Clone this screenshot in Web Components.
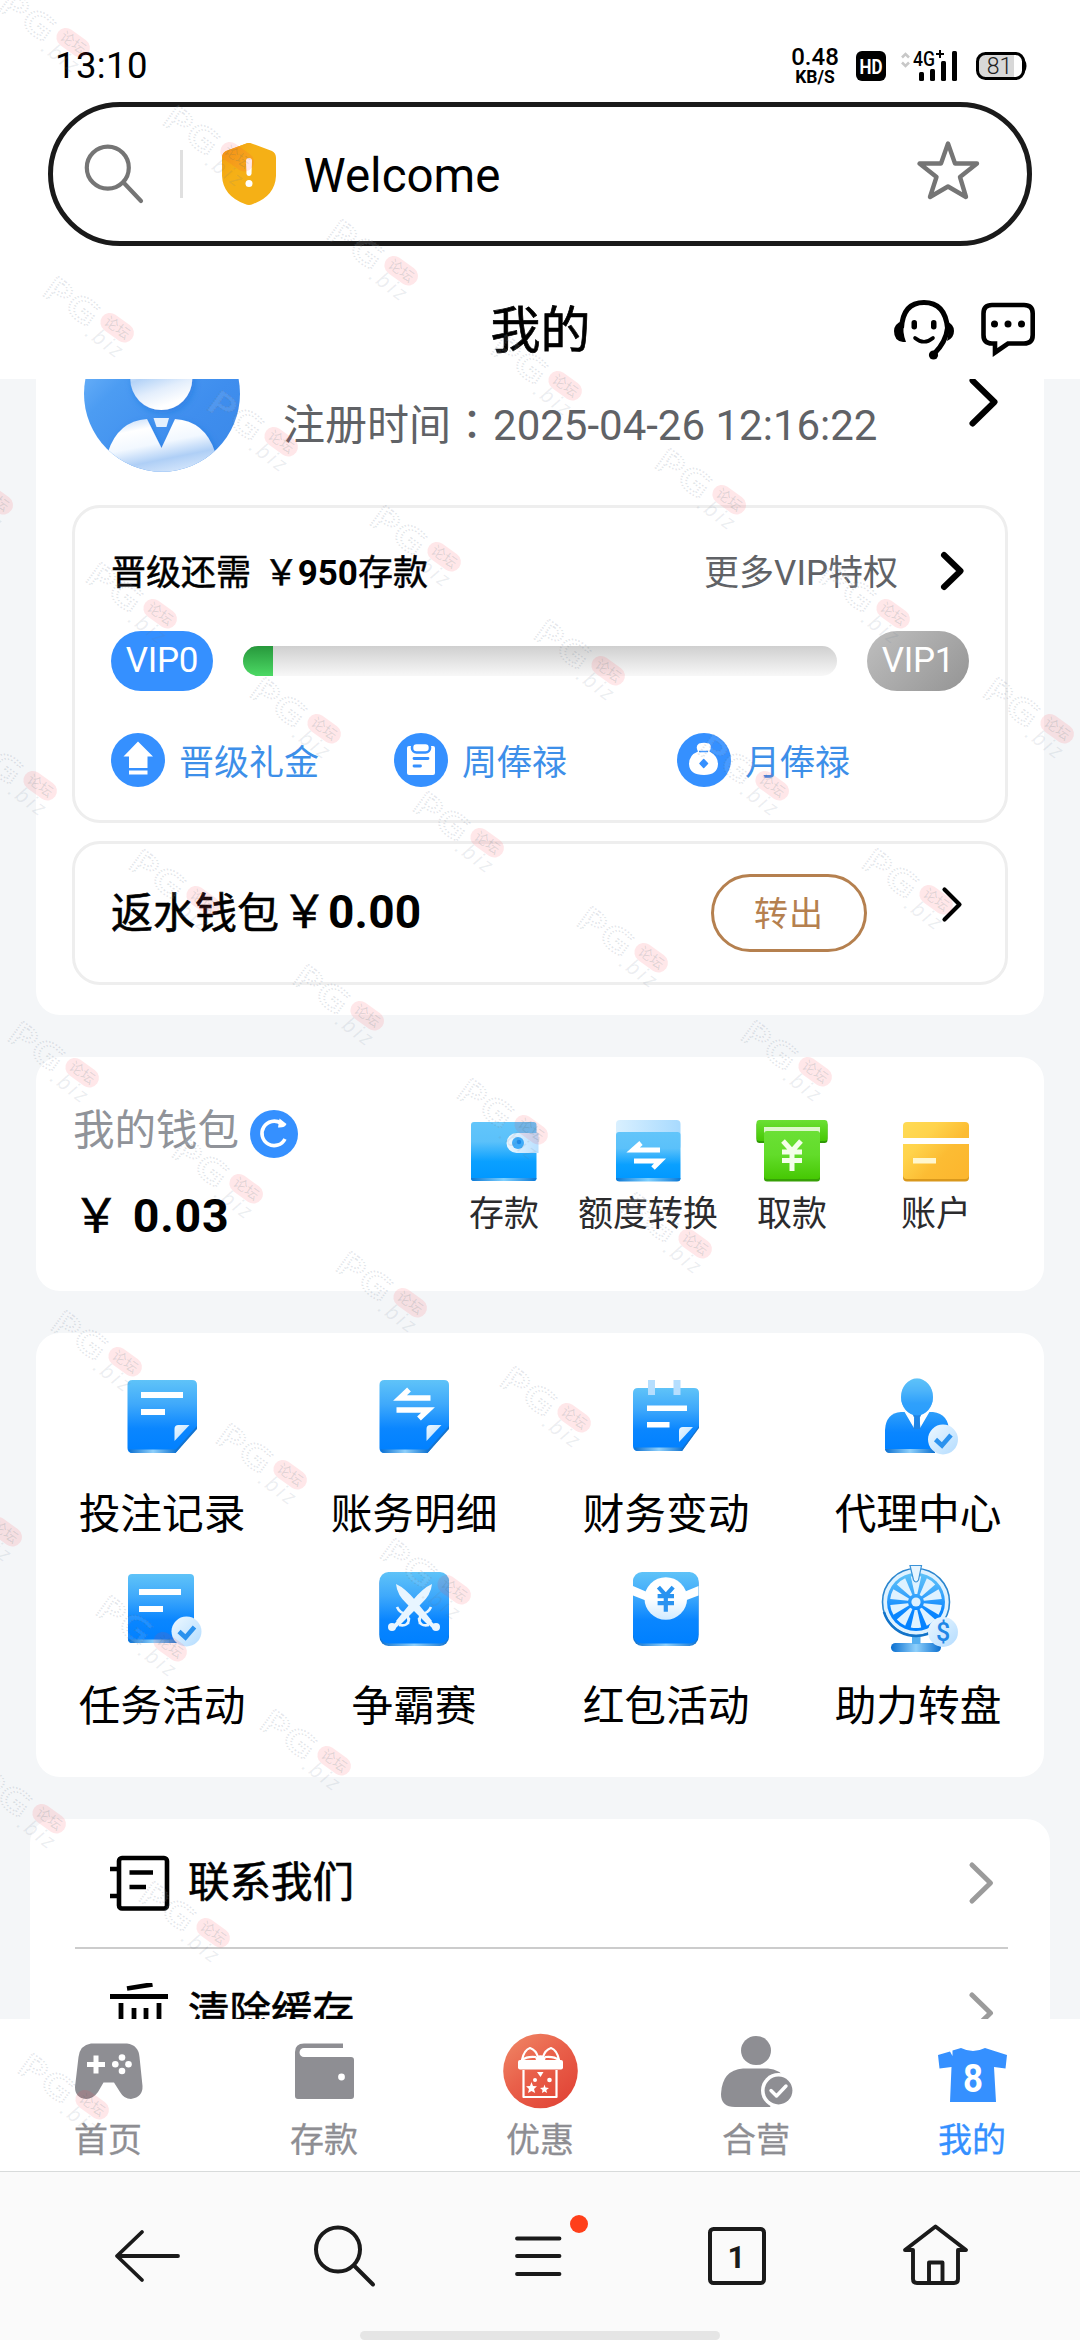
<!DOCTYPE html>
<html lang="zh-CN">
<head>
<meta charset="utf-8">
<title>我的</title>
<style>
html,body{margin:0;padding:0}
body{width:1080px;height:2340px;overflow:hidden;background:#fff;font-family:Roboto,"Noto Sans CJK SC",sans-serif;color:#000}
</style>
</head>
<body>
<app-screen></app-screen>
<script>
const G = (id, stops, x2 = 0, y2 = 1) => `<linearGradient id="${id}" x1="0" y1="0" x2="${x2}" y2="${y2}">${stops.map((s, i) => `<stop offset="${i / (stops.length - 1)}" stop-color="${s}"/>`).join('')}</linearGradient>`;
const BLUE = G('b', ['#5fc3f8', '#3fa9fb', '#0a86ff', '#0080ff']) + G('l', ['#eef8ff', '#b3dcff'], 1, 1) + G('s', ['#0a6fd0', '#8fd0fb', '#0a6fd0'], 1, 0);
const badge = (x, y) => `<circle cx="${x}" cy="${y}" r="15" fill="url(#l)"/><path d="M${x - 7.5} ${y}L${x - 1} ${y + 6}L${x + 8} ${y - 4.5}" fill="none" stroke="#2b92ee" stroke-width="4.6"/>`;
const doc = x => `<path d="M${x + 5} 1380H${x + 64.5}Q${x + 69.5} 1380 ${x + 69.5} 1385V1428L${x + 48} 1453H${x + 5}Q${x} 1453 ${x} 1448V1385Q${x} 1380 ${x + 5} 1380Z" fill="url(#b)"/><path d="M${x + 1} 1449.500H${x + 50}L${x + 48} 1453H${x + 5}Q${x + 2} 1453 ${x + 1} 1449.500Z" fill="url(#s)"/><path d="M${x + 69.5} 1426V1429L${x + 48} 1453L${x + 49} 1449Z" fill="#1473cf"/><path d="M${x + 47} 1429Q${x + 47} 1425 ${x + 51} 1425H${x + 62}L${x + 47} 1441Z" fill="url(#l)"/>`;
const wedge = a => { const p = (r, d) => { const t = (a + d) * Math.PI / 180; return `${(916 + r * Math.sin(t)).toFixed(1)} ${(1602 - r * Math.cos(t)).toFixed(1)}`; }; return `<path d="M${p(8, -9)}L${p(26, -11.500)}A26 26 0 0 1 ${p(26, 11.500)}L${p(8, 9)}Z" fill="#dff2ff"/>`; };
const sword = `<path d="M396 1584Q397 1595 407 1604L428 1625L432 1621L415 1600Q405 1588 396 1584Z" fill="#e8f5ff"/><path d="M420 1624Q418 1616 424 1613M431 1607Q428 1614 420 1614M419 1618Q419 1627 429 1625" fill="none" stroke="#e8f5ff" stroke-width="2.6"/><path d="M424 1617L434 1627" stroke="#e8f5ff" stroke-width="4"/><circle cx="436" cy="1627" r="4" fill="#e8f5ff"/>`;
const yen = (x, y, k, c, w) => `<path d="M${x - 9 * k} ${y - 15 * k}L${x} ${y - 5 * k}L${x + 9 * k} ${y - 15 * k}M${x} ${y - 5 * k}V${y + 15 * k}M${x - 10 * k} ${y - 4 * k}H${x + 10 * k}M${x - 10 * k} ${y + 4.500 * k}H${x + 10 * k}" fill="none" stroke="${c}" stroke-width="${w}"/>`;
const chev = (x, y, w, h, sw, c) => `<path d="M${x} ${y - h}L${x + w} ${y}L${x} ${y + h}" fill="none" stroke="${c}" stroke-width="${sw}" stroke-linecap="round" stroke-linejoin="round"/>`;

const ICONS = {
  hd: ['856 50 31 31', `<rect x="856" y="51" width="30" height="30" rx="6"/><text x="871" y="73.500" font-size="21" font-weight="700" fill="#fff" text-anchor="middle" textLength="23" lengthAdjust="spacingAndGlyphs">HD</text>`],
  signal: ['900 46 60 38', `<path d="M902 57.500L905.500 54L909 57.500M902 62.500L905.500 66L909 62.500" fill="none" stroke="#c8c8c8" stroke-width="2.6"/><text x="913" y="66" font-size="20.500" font-weight="500" textLength="22" lengthAdjust="spacingAndGlyphs">4G</text><path d="M936 54H944M940 50V58" stroke="#000" stroke-width="2"/><rect x="919" y="72" width="5" height="9" rx="1.500"/><rect x="930" y="69" width="5" height="12" rx="1.500"/><rect x="941" y="61" width="5" height="20" rx="1.500"/><rect x="952" y="51" width="5" height="30" rx="1.500"/>`],
  battery: ['976 50 52 32', `<path d="M984 55H1014V77H984Q979 77 979 70V62Q979 55 984 55Z" fill="#d8d8d8"/><rect x="977.500" y="53.500" width="46" height="25" rx="8" fill="none" stroke="#000" stroke-width="3"/><path d="M1024 60Q1027.500 66 1024 72Z" stroke="#000" stroke-width="1.500"/><text x="999.500" y="73.500" font-size="23" font-weight="300" fill="#222" text-anchor="middle">81</text>`],
  search: ['84 142 60 62', `<g fill="none" stroke="#757575" stroke-width="4.200" stroke-linecap="round"><circle cx="107.800" cy="167.700" r="21"/><path d="M124 183L141 201"/></g>`],
  shield: ['222 142 54 64', `<defs>${G('y', ['#f29a10', '#f5b016', '#f5b016'], 1, 1)}<clipPath id="c"><path d="M249 143Q251 143 253 144L272 151Q276 153 276 158V176Q275 196 253 204Q249 206 245 204Q223 196 222 176V158Q222 153 226 151L245 144Q247 143 249 143Z"/></clipPath></defs><g clip-path="url(#c)"><rect x="222" y="142" width="54" height="64" fill="#f5b016"/><path d="M222 142H249Q262 152 257 166Q236 168 229 190Q220 180 222 142Z" fill="url(#y)"/></g><path d="M246 161Q246 158 249 158Q252 158 252 161L251.500 174Q251 176 249 176Q247 176 246.500 174Z" fill="#fff"/><circle cx="249" cy="183.500" r="3.500" fill="#fff"/>`],
  star: ['915 139 66 62', `<path d="M948 143.500L955 163.500H977L960 177L966 197L948 186.500L930 197L936.500 177L919.500 163.500H941Z" fill="none" stroke="#757575" stroke-width="4.400" stroke-linejoin="round"/>`],
  headset: ['893 298 62 63', `<path d="M901.500 328Q903 302.500 924 302.500Q945 302.500 947.500 328Q946 342 934 354" fill="none" stroke="#000" stroke-width="5"/><path d="M902 321Q894 324 894 331Q894 341 903 342H906Q902 332 904 321Z"/><path d="M946 321Q954 324 954 331Q954 338 947 341Q950 331 946 321Z"/><circle cx="933.500" cy="355" r="4.600"/><rect x="911.500" y="320" width="5.500" height="9.500" rx="2.700"/><rect x="931" y="320" width="5.500" height="9.500" rx="2.700"/><path d="M915 338Q924 345.500 933 338" fill="none" stroke="#000" stroke-width="3.600" stroke-linecap="round"/>`],
  chat: ['980 301 56 58', `<path d="M992 305H1024Q1032.700 305 1032.700 313.500V335Q1032.700 343.500 1024 343.500H1008L995 352.500V343.500H992Q983.500 343.500 983.500 335V313.500Q983.500 305 992 305Z" fill="none" stroke="#000" stroke-width="4.600"/><circle cx="994.500" cy="324" r="3.500"/><circle cx="1008" cy="324" r="3.500"/><circle cx="1021.500" cy="324" r="3.500"/>`],
  avatar: ['84 379 156 93', `<defs>${G('a', ['#86c4ff', '#4c9cf2', '#3f8eee', '#3a88e8'], 1, 1)}${G('w', ['#e4effc', '#ffffff', '#b4d3f7', '#e3eefc', '#ffffff'], .35, 1)}${G('v', ['#b7d5f8', '#ffffff', '#f2f8ff', '#afcff6', '#d8e8fc'], .35, 1)}<clipPath id="k"><circle cx="162" cy="393.700" r="78"/></clipPath><filter id="f" x="-30%" y="-30%" width="160%" height="160%"><feDropShadow dx="2" dy="3" stdDeviation="3.500" flood-color="#1d6fd8" flood-opacity=".45"/></filter></defs><circle cx="162" cy="393.700" r="78" fill="url(#a)"/><g clip-path="url(#k)"><circle cx="161.300" cy="379" r="31" fill="url(#w)" filter="url(#f)"/><path d="M147 419L161.500 448L175 419Q205 421 215 452V480H108V452Q118 421 147 419Z" fill="url(#v)" filter="url(#f)"/><path d="M153.500 418H169L166.500 427H156.500Z" fill="#e4f0fd"/></g>`],
  'chev-profile': ['965 379 40 52', chev(972.5, 402, 22, 21.5, 6, '#000')],
  'chev-vip': ['936 548 32 46', chev(944, 571, 16.5, 16, 6, '#000')],
  'chev-rebate': ['936 881 32 46', chev(944.5, 904.5, 15, 15, 4.2, '#000')],
  'chev-list': ['964 1856 34 52', chev(971, 1882, 18.5, 18, 5, '#9b9b9b')],
  up: ['111 733 54 54', `<circle cx="138" cy="760" r="27" fill="#3590ff"/><path d="M138 741.500L153 756.500H147.500V768H129V756.500H123.500Z" fill="#fff"/><rect x="129" y="770.500" width="18.500" height="4" fill="#fff"/>`],
  clip: ['394 733 54 54', `<circle cx="421" cy="760" r="27" fill="#3590ff"/><rect x="407" y="746" width="28" height="29" rx="2" fill="#fff"/><rect x="412" y="743" width="18" height="9.500" rx="4.500" fill="#fff" stroke="#3590ff" stroke-width="2.600"/><path d="M414 758.500H428M414 766H420.500" stroke="#3590ff" stroke-width="2.800" stroke-linecap="round"/>`],
  bag: ['677 733 54 54', `<circle cx="704" cy="760" r="27" fill="#3590ff"/><path d="M698 751.500Q695 746 699 743.500Q704 742 709 743.500Q712.500 746 709.500 751.500Q718 756 718 764Q717.500 775 704 775Q689.500 775 689 764Q689 755 698 751.500Z" fill="#fff"/><path d="M699 751.500H708" stroke="#3590ff" stroke-width="1.500"/><path d="M703.700 759.500L707.500 763.500L703.700 767.500L700 763.500Z" fill="#3590ff" stroke="#3590ff" stroke-width="1.500" stroke-linejoin="round"/>`],
  refresh: ['250 1109 48 48', `<circle cx="274" cy="1133" r="24" fill="#3590ff"/><path d="M281 1122.300A12.200 12.200 0 1 0 285 1138" fill="none" stroke="#fff" stroke-width="3.600"/><path d="M279.500 1117.500L286.500 1123Q285 1127 278 1126.500Z" fill="#fff"/>`],
  deposit: ['468.500 1118 72 66', `<defs>${G('b', ['#62c5fa', '#5bc1fa', '#0aa0ff', '#0097ff'])}${G('s', ['#0b78d5', '#7ed0ff', '#0b78d5'], 1, 0)}${G('l', ['#eaf7ff', '#b9e0ff'], 1, 0)}</defs><rect x="471.500" y="1122" width="65.500" height="59" rx="3" fill="url(#b)"/><path d="M471.500 1178H537Q537 1181 534 1181H474.500Q471.500 1181 471.500 1178Z" fill="url(#s)"/><path d="M517 1133H539V1153H517A10 10 0 0 1 517 1133Z" fill="url(#l)"/><circle cx="518.500" cy="1143" r="6" fill="#3fabf8"/><circle cx="519.500" cy="1142" r="2.200" fill="#1b8ae8"/>`],
  transfer: ['612 1118 72 66', `<defs>${G('b', ['#62c5fa', '#5bc1fa', '#0aa0ff', '#0097ff'])}${G('s', ['#0b78d5', '#7ed0ff', '#0b78d5'], 1, 0)}${G('l', ['#d9f0ff', '#a8dafe'], 1, 0)}</defs><rect x="616" y="1120" width="64.500" height="30" rx="4" fill="url(#l)"/><rect x="616" y="1132" width="64.500" height="49" rx="3" fill="url(#b)"/><path d="M616 1178H680.500Q680.500 1181.500 677 1181.500H619.500Q616 1181.500 616 1178Z" fill="url(#s)"/><path d="M660 1150H633L641 1143M634 1161H660L653 1168" fill="none" stroke="#fff" stroke-width="5"/>`],
  withdraw: ['756 1118 72 66', `<defs>${G('g', ['#6be035', '#62dc2a', '#46c803'])}${G('h', ['#6be035', '#46c803'])}</defs><rect x="756.500" y="1122" width="71" height="21" rx="3" fill="#2f9a05"/><rect x="756.500" y="1120" width="71" height="21" rx="3" fill="url(#h)"/><path d="M764 1127H820V1133H764Z" fill="#dcf8cb"/><rect x="764" y="1135" width="56" height="46.500" rx="3" fill="#36a006"/><rect x="764" y="1131" width="56" height="48" rx="3" fill="url(#g)"/>${yen(792, 1156, 1, '#f3ffe9', 5)}`],
  card: ['900 1118 72 66', `<defs>${G('o', ['#ffdb55', '#ffd34b', '#fcbc33', '#fcb72f'], 1, .8)}</defs><rect x="903" y="1124" width="66" height="57.500" rx="4" fill="#d9981c"/><rect x="903" y="1122" width="66" height="57" rx="4" fill="url(#o)"/><rect x="903" y="1138" width="66" height="6" fill="#fff"/><rect x="913" y="1158" width="23" height="5.500" fill="#fff7cf"/>`],
  bets: ['122 1372 80 88', `<defs>${BLUE}</defs>${doc(127.5)}<rect x="141" y="1392" width="42" height="6" fill="#fff"/><rect x="141" y="1409" width="24" height="6" fill="#fff"/>`],
  accounts: ['374 1372 80 88', `<defs>${BLUE}</defs>${doc(379.5)}<path d="M430.500 1398H400L409 1389.500M396.500 1410H428L419 1418.500" fill="none" stroke="#fff" stroke-width="5.500"/>`],
  finance: ['626 1372 80 88', `<defs>${BLUE}</defs><path d="M638 1388H694Q699 1388 699 1393V1427L682 1451H638Q633 1451 633 1446V1393Q633 1388 638 1388Z" fill="url(#b)"/><path d="M634 1447.500H684L682 1451H638Q635 1451 634 1447.500Z" fill="url(#s)"/><path d="M699 1426V1428L682 1451L683 1447Z" fill="#1473cf"/><path d="M679 1431Q679 1427 683 1427H693L679 1442Z" fill="url(#l)"/><rect x="648" y="1380" width="7" height="15" fill="#b5defe"/><rect x="673.500" y="1380" width="7" height="15" fill="#b5defe"/><rect x="647" y="1405.500" width="40" height="5.500" fill="#fff"/><rect x="647" y="1422" width="22.500" height="5.500" fill="#fff"/>`],
  agent: ['878 1372 82 88', `<defs>${BLUE}${G('d', ['#2f9ffa', '#0a86ff', '#0080ff'])}</defs><path d="M902 1412H934Q950 1414 950 1432V1452H890Q886 1452 886 1448V1430Q887 1413 902 1412Z" fill="url(#d)"/><path d="M886 1449H936V1453H890Q887 1453 886 1449Z" fill="url(#s)"/><path d="M905 1411L915.500 1429L915 1418H921L920.500 1429L931 1411Z" fill="#fff"/><path d="M913.500 1414H922.500L920.500 1418.500L921.500 1429H914.500L915.500 1418.500Z" fill="#1f84e4"/><ellipse cx="918" cy="1397" rx="16" ry="18.500" fill="url(#b)"/><ellipse cx="918" cy="1397" rx="16" ry="18.500" fill="#5ec1f8" opacity=".45"/>${badge(944, 1439.5)}`],
  task: ['122 1564 82 88', `<defs>${BLUE}</defs><rect x="129" y="1574" width="66" height="69" rx="4" fill="url(#b)"/><path d="M129 1639.500H182V1643H133Q130 1643 129 1639.500Z" fill="url(#s)"/><rect x="140" y="1589" width="42" height="6" fill="#fff"/><rect x="140" y="1606" width="24" height="6" fill="#fff"/>${badge(187.5, 1631.5)}`],
  battle: ['374 1564 80 88', `<defs>${BLUE}</defs><rect x="379.500" y="1574" width="69.500" height="72" rx="9" fill="url(#s)"/><rect x="379.500" y="1572" width="69.500" height="71.500" rx="9" fill="url(#b)"/>${sword}<g transform="matrix(-1 0 0 1 828 0)">${sword}</g>`],
  redpack: ['626 1564 80 88', `<defs>${BLUE}${G('m', ['#ffffff', '#ffffff', '#cfeaff'])}</defs><rect x="633" y="1574" width="65.500" height="72" rx="9" fill="url(#s)"/><rect x="633" y="1572" width="65.500" height="71.500" rx="9" fill="url(#b)"/><path d="M633 1586L647 1592V1601L633 1595.500ZM698.500 1586L684 1592V1601L698.500 1595.500Z" fill="#fff"/><circle cx="665.800" cy="1598.500" r="21.300" fill="url(#m)"/>${yen(665.800, 1599.500, .82, '#2a93f0', 4.2)}`],
  wheel: ['876 1560 84 96', `<defs>${BLUE}</defs><rect x="891" y="1643" width="50" height="9" rx="4.500" fill="url(#s)"/><rect x="912" y="1635" width="8.500" height="9" fill="#57b0f0"/><circle cx="916" cy="1602" r="33.500" fill="#dff2ff" stroke="#2b86cf" stroke-width="1.600"/><path d="M884 1612A33.500 33.500 0 0 0 940 1626" fill="none" stroke="#1273c9" stroke-width="2.600"/><circle cx="916" cy="1602" r="29" fill="url(#b)"/>${[0, 36, 72, 108, 144, 180, 216, 252, 288, 324].map(wedge).join('')}<circle cx="916" cy="1602" r="4.600" fill="#dff2ff"/><path d="M910 1565.500H921.500L918.500 1580Q916 1584 913.500 1580Z" fill="#e6f5ff" stroke="#3b93d8" stroke-width="1.200"/><circle cx="943" cy="1632" r="15" fill="url(#l)"/><text x="943" y="1641" font-size="25" font-weight="500" fill="#1f87e6" text-anchor="middle">$</text>`],
  contact: ['108 1850 64 60', `<rect x="119" y="1855" width="48" height="50.500" rx="3" fill="none" stroke="#000" stroke-width="4.600"/><path d="M110 1866H119M110 1893H119M129.500 1869.500H153M129.500 1884H146" stroke="#000" stroke-width="4.500"/>`],
  trash: ['108 1980 64 60', `<path d="M127 1985.500L152.500 1981.500M110 1993.500H168" stroke="#000" stroke-width="4.800"/><path d="M121 2000V2036M134 2005V2030M146 2005V2030M159 2000V2036" stroke="#000" stroke-width="4.800"/>`],
  home: ['70 2030 76 82', `<path fill="#8e8e93" d="M91 2043.500H127Q138.500 2045 139.500 2057L142.500 2086Q143 2097 131 2099Q124 2099 120 2092L114 2082.500H103.500L98 2092Q93 2099 86 2099Q75 2098 75 2087L78.500 2057Q80 2045 91 2043.500Z"/><path d="M87 2064.500H105M96 2055.500V2073.500" stroke="#fff" stroke-width="5"/><g fill="#fff"><circle cx="122" cy="2057.500" r="3.300"/><circle cx="122" cy="2071" r="3.300"/><circle cx="115.300" cy="2064.200" r="3.300"/><circle cx="128.500" cy="2064.200" r="3.300"/></g>`],
  wallet: ['286 2030 76 82', `<path fill="#8e8e93" d="M343 2043.500H304Q295 2043.500 295 2052V2096Q295 2099 298 2099H351Q354 2099 354 2096V2060Q354 2057 351 2057H304A4.500 4.500 0 0 1 304 2048H343Z"/><circle cx="341.500" cy="2077" r="3.400" fill="#fff"/>`],
  gift: ['502 2030 76 82', `<defs>${G('r', ['#f08a68', '#e9604a', '#e14436'], .8, 1)}</defs><circle cx="540.500" cy="2071" r="37.300" fill="url(#r)"/><g fill="none" stroke="#fff" stroke-width="2.200" stroke-linejoin="round"><path d="M536 2057Q527 2056 522 2060Q524 2050 530 2048Q536 2050 538 2057M545 2057Q554 2056 559 2060Q557 2050 551 2048Q545 2050 543 2057M523.500 2070V2097H556.500V2070"/></g><rect x="518" y="2060" width="45" height="9.500" rx="2" fill="#fff"/><ellipse cx="540.500" cy="2058.500" rx="5" ry="3.200" fill="#fff"/><path d="M531.500 2082L533 2086L537 2086.300L534 2089L535.200 2093L531.500 2091L528 2093L529 2089L526 2086.300L530 2086ZM544.500 2084.500L545.500 2087.500L549 2088L546.300 2090L547 2093L544.500 2091.500L542 2093L542.500 2090L540 2088L543.500 2087.500Z" fill="#fff"/><circle cx="535" cy="2080" r="2" fill="#fff"/><path d="M537 2072H543.500L540.500 2077Z" fill="#fff"/><circle cx="549.500" cy="2080" r="2.300" fill="#fff"/>`],
  partner: ['718 2030 76 82', `<ellipse cx="756" cy="2050.500" rx="15" ry="14.600" fill="#8e8e93"/><path d="M743 2068.500H768Q780 2069 786 2080L770 2107H735Q721 2107 721 2094Q722 2070 743 2068.500Z" fill="#8e8e93"/><circle cx="778.500" cy="2090.500" r="17.500" fill="#fff"/><circle cx="778.500" cy="2090.500" r="13.900" fill="#8e8e93"/><path d="M771 2090.500L776.500 2096L786 2086" fill="none" stroke="#fff" stroke-width="3.400" stroke-linecap="round" stroke-linejoin="round"/>`],
  mine: ['934 2030 76 82', `<path fill="#3590ff" d="M938 2055L950 2051.500L952.500 2056V2050.500L961 2048Q973 2054 985 2048L1007 2055L1005.500 2068.500L994 2067L996 2102H950L951.500 2067L939.500 2068.500Z"/><text x="973" y="2092" font-size="39" font-weight="700" fill="#fff" text-anchor="middle" textLength="20" lengthAdjust="spacingAndGlyphs">8</text>`],
  back: ['112 2220 72 72', `<path d="M142 2232L117 2256H178M117 2256L142 2280" fill="none" stroke="#1a1a1a" stroke-width="3.800" stroke-linecap="round" stroke-linejoin="round"/>`],
  find: ['309 2220 72 72', `<g fill="none" stroke="#1a1a1a" stroke-width="4" stroke-linecap="round"><circle cx="338" cy="2249.500" r="22"/><path d="M354.500 2266L373 2284.500"/></g>`],
  menu: ['502 2212 92 80', `<path d="M517 2238.500H559.500M517 2256H559.500M517 2274H559.500" stroke="#1a1a1a" stroke-width="3.800" stroke-linecap="round"/><circle cx="579" cy="2224" r="9" fill="#ff3f1a"/>`],
  tabs: ['701 2220 72 72', `<rect x="710" y="2229" width="54" height="54" rx="3.500" fill="none" stroke="#1a1a1a" stroke-width="4"/><text x="736.500" y="2268" font-size="31" font-weight="700" fill="#1a1a1a" text-anchor="middle">1</text>`],
  house: ['900 2220 72 72', `<path d="M913 2250H905L935.500 2226.500L966 2250H958V2279Q958 2283 954 2283H917Q913 2283 913 2279ZM929 2283V2262.500H942.500V2283" fill="none" stroke="#1a1a1a" stroke-width="3.900" stroke-linejoin="round"/>`]
};

const define = (name, css, html) => customElements.define(name, class extends HTMLElement {
  connectedCallback() {
    if (this.shadowRoot) return;
    const root = this.attachShadow({ mode: 'open' });
    root.innerHTML = `<style>*{box-sizing:border-box}${css}</style>${typeof html === 'function' ? html(this) : html}`;
  }
});

define('ui-icon', ':host{display:block;flex:none}svg{display:block;overflow:hidden}text{font-family:Roboto,sans-serif}', el => {
  const [vb, body] = ICONS[el.getAttribute('name')];
  const [, , w, h] = vb.split(' ');
  return `<svg width="${w}" height="${h}" viewBox="${vb}">${body}</svg>`;
});

define('status-bar', `:host{display:flex;height:102px;padding:0 52px 0 55px;align-items:flex-start}
.time{font-size:36.500px;line-height:44px;margin-top:44px;flex:1;letter-spacing:.4px}
.net{width:54px;text-align:center;font-weight:500;margin:46px 14px 0 0;font-size:24px;line-height:23px}
.net small{display:block;font-size:17.500px;line-height:16px;font-weight:700}
.hd{margin-top:50px}.sig{margin:46px 16px 0 13px}.bat{margin-top:50px}`,
`<span class="time">13:10</span><span class="net">0.48<small>KB/S</small></span><ui-icon class="hd" name="hd"></ui-icon><ui-icon class="sig" name="signal"></ui-icon><ui-icon class="bat" name="battery"></ui-icon>`);

define('address-bar', `:host{display:flex;align-items:center;height:144px;margin:0 48px;border:5px solid #1a1a1a;border-radius:72px;padding:0 46px 0 31px}
i{width:2.500px;height:48px;background:#e0e0e0;margin:0 39px 0 36px}
span{flex:1;font-size:47.500px;line-height:60px;margin:4px 0 0 28px}ui-icon.st{margin-top:-8px}ui-icon.se{margin-top:-2px}`,
`<ui-icon class="se" name="search"></ui-icon><i></i><ui-icon name="shield"></ui-icon><span>Welcome</span><ui-icon class="st" name="star"></ui-icon>`);

define('page-header', `:host{display:grid;grid-template-columns:1fr auto 1fr;height:133px;align-items:start;padding-right:44px}
h1{grid-column:2;margin:0 0 0 45px;font-size:50px;line-height:60px;padding-top:55px;font-weight:400;-webkit-text-stroke:.7px #000}
.tools{display:flex;justify-content:flex-end;gap:25px;padding-top:52px}.tools .c{margin-top:3px}`,
`<h1>我的</h1><div class="tools"><ui-icon name="headset"></ui-icon><ui-icon class="c" name="chat"></ui-icon></div>`);

define('ui-card', `:host{display:block;background:#fff;border-radius:24px;margin:0 36px 42px;flex:none}`, '<slot></slot>');

define('profile-row', `:host{display:flex;height:126px;align-items:flex-start;padding:0 39px 0 48px}
span{flex:1;font-size:42px;line-height:50px;color:#606266;margin:22px 0 0 43px;white-space:nowrap}
b{font-weight:400;font-family:"Noto Sans CJK TC",sans-serif;line-height:1}`,
`<ui-icon name="avatar"></ui-icon><span><slot></slot><b lang="zh-TW">：</b>2025-04-26 12:16:22</span><ui-icon name="chev-profile"></ui-icon>`);

define('vip-panel', `:host{display:block;height:318px;margin:0 36px;border:3px solid #eee;border-radius:28px;padding:0 36px}
.top,.bar,.perks{display:flex;align-items:center}
.top{height:46px;margin-top:40px;font-size:35px;line-height:46px;white-space:nowrap}
.need{flex:1;padding-top:5px;-webkit-text-stroke:.5px #000}.need b{-webkit-text-stroke:0}.need em{font-style:normal;margin:0 -1px 0 4px}
.more{color:#606266;margin-right:38px;padding-top:5px}.top ui-icon{margin-right:1px}
.bar{height:60px;margin-top:37px}
.pill{width:102px;height:60px;border-radius:30px;color:#fff;font-size:35px;line-height:60px;text-align:center;letter-spacing:-.3px;background:#3590ff}
.pill.n{background:linear-gradient(135deg,#bfbfbf,#949494)}
.track{flex:1;height:30px;margin:0 30px;border-radius:15px;overflow:hidden;background:linear-gradient(#cfcfcf,#f8f8f8)}
.track i{display:block;width:5%;height:30px;background:linear-gradient(#27983c,#4cd964)}
.perks{margin-top:42px;color:#3d8fe9;font-size:35px;line-height:54px}
.perks div{display:flex;width:283px;height:54px;gap:14px}.perks span{padding-top:4px}`,
`<div class="top"><span class="need">晋级还需 <em>￥</em><b>950</b>存款</span><span class="more">更多VIP特权</span><ui-icon name="chev-vip"></ui-icon></div>
<div class="bar"><span class="pill">VIP0</span><div class="track"><i></i></div><span class="pill n">VIP1</span></div>
<div class="perks"><div><ui-icon name="up"></ui-icon><span>晋级礼金</span></div><div><ui-icon name="clip"></ui-icon><span>周俸禄</span></div><div><ui-icon name="bag"></ui-icon><span>月俸禄</span></div></div>`);

define('rebate-panel', `:host{display:flex;height:144px;margin:18px 36px 0;border:3px solid #eee;border-radius:28px;padding:0 37px 0 36px;align-items:center}
.t{flex:1;font-size:42px;line-height:60px;-webkit-text-stroke:.6px #000;white-space:nowrap}
b{font-size:46px;-webkit-text-stroke:0;letter-spacing:.2px}em{font-style:normal;font-size:45px;margin:0 1px 0 3px}
.btn{width:156px;height:78px;border:3px solid #b5804f;border-radius:39px;color:#b5804f;font-size:34px;line-height:74px;text-align:center;letter-spacing:1px;margin-right:69px}
ui-icon{margin-top:-18px}`,
`<span class="t">返水钱包<em>￥</em><b>0.00</b></span><span class="btn">转出</span><ui-icon name="chev-rebate"></ui-icon>`);

define('icon-action', `:host{display:flex;flex-direction:column;align-items:center;width:var(--w);font-size:var(--fs);color:var(--c);line-height:50px;white-space:nowrap}
span{margin-top:var(--gap)}`, el => `<ui-icon name="${el.getAttribute('icon')}"></ui-icon><span><slot></slot></span>`);

define('wallet-panel', `:host{display:flex;height:234px;padding:0 36px 0 37px;--w:144px;--fs:35px;--c:#2b2b2d;--gap:6px}
.l{flex:1}.n{display:flex;gap:11px;color:#909399;font-size:41.500px;line-height:52px;margin-top:47px;align-items:center}.n ui-icon{margin-top:6px}
.m{font-size:46.500px;line-height:60px;font-weight:700;margin-top:28px;white-space:nowrap;letter-spacing:.8px}.m em{font-style:normal;font-weight:400;-webkit-text-stroke:.7px #000}
.r{display:flex;padding-top:61px}`,
`<div class="l"><div class="n">我的钱包<ui-icon name="refresh"></ui-icon></div><div class="m"><em>￥</em> 0.03</div></div>
<div class="r"><icon-action icon="deposit">存款</icon-action><icon-action icon="transfer">额度转换</icon-action><icon-action icon="withdraw">取款</icon-action><icon-action icon="card">账户</icon-action></div>`);

define('feature-grid', `:host{display:grid;grid-template-columns:repeat(4,252px);height:444px;grid-auto-rows:192px;--w:252px;--fs:41.700px;--c:#000;--gap:30px;padding-top:39px}
icon-action.w{margin-top:-4px;--gap:26px}`,
`<icon-action icon="bets">投注记录</icon-action><icon-action icon="accounts">账务明细</icon-action><icon-action icon="finance">财务变动</icon-action><icon-action icon="agent">代理中心</icon-action>
<icon-action icon="task">任务活动</icon-action><icon-action icon="battle">争霸赛</icon-action><icon-action icon="redpack">红包活动</icon-action><icon-action class="w" icon="wheel">助力转盘</icon-action>`);

define('list-row', `:host{display:flex;align-items:center;height:130px;margin:0 42px 0 45px;padding:0 9px 0 33px;border-bottom:2px solid #ccc;flex:none}
span{flex:1;font-size:41.500px;line-height:50px;margin-left:16px;-webkit-text-stroke:.6px #000}`,
el => `<ui-icon name="${el.getAttribute('icon')}"></ui-icon><span><slot></slot></span><ui-icon name="chev-list"></ui-icon>`);

define('scroll-view', ':host{display:flex;flex-direction:column;height:1640px;background:#f4f6f8;overflow:hidden;flex:none}',
`<ui-card style="border-radius:0 0 24px 24px;height:636px"><profile-row>注册时间</profile-row><vip-panel></vip-panel><rebate-panel></rebate-panel></ui-card>
<ui-card><wallet-panel></wallet-panel></ui-card>
<ui-card><feature-grid></feature-grid></ui-card>
<ui-card style="margin:0 30px"><list-row icon="contact">联系我们</list-row><list-row icon="trash">清除缓存</list-row></ui-card>`);

define('tab-bar', `:host{display:flex;height:152px;background:#fff;--w:216px;--fs:34px;--c:#8e8e93;--gap:3px;padding-top:11px;-webkit-text-stroke:.3px}
.on{--c:#3590ff}`,
`<icon-action icon="home">首页</icon-action><icon-action icon="wallet">存款</icon-action><icon-action icon="gift">优惠</icon-action><icon-action icon="partner">合营</icon-action><icon-action class="on" icon="mine">我的</icon-action>`);

define('browser-bar', `:host{display:flex;flex-direction:column;align-items:center;height:169px;background:#fafafa;border-top:1.500px solid #d8dbdb}
nav{display:grid;grid-template-columns:197px 193px 199px 199px 72px;align-items:end;align-self:stretch;padding-left:112px;height:120px;flex:none}
i{display:block;width:360px;height:9px;border-radius:5px;background:#e5e5e5;margin-top:auto}`,
`<nav><ui-icon name="back"></ui-icon><ui-icon name="find"></ui-icon><ui-icon name="menu"></ui-icon><ui-icon name="tabs"></ui-icon><ui-icon name="house"></ui-icon></nav><i></i>`);

const STAMPS = [[-3, -9], [161, 105], [325, 219], [489, 334], [653, 448], [817, 562], [981, 677], [41, 276], [205, 390], [368, 505], [532, 619], [696, 734], [860, 848], [-80, 448], [84, 562], [248, 677], [411, 791], [575, 906], [739, 1020], [-36, 734], [127, 849], [291, 964], [455, 1078], [619, 1192], [6, 1021], [170, 1137], [334, 1251], [498, 1366], [49, 1310], [214, 1423], [378, 1538], [-71, 1480], [94, 1595], [258, 1709], [-27, 1767], [137, 1881], [16, 2053]];
define('stamp-layer', `:host{position:absolute;inset:0;overflow:hidden;pointer-events:none}svg{display:block}`,
`<svg width="1080" height="2340"><defs><g id="w"><g transform="translate(-1 21) rotate(36)"><text x="-2" y="-3" font-family="Open Sans,sans-serif" font-weight="600" font-size="34" textLength="60" lengthAdjust="spacingAndGlyphs" fill="#fff" fill-opacity=".1" stroke="#6a7a90" stroke-opacity=".2" stroke-width="1.600" stroke-dasharray="1.200 1.600">PG</text><rect x="62" y="-30" width="37" height="19" rx="9.500" fill="#ff3b46" fill-opacity=".12"/><text x="80.500" y="-15.500" font-family="Noto Sans CJK SC,sans-serif" font-size="14" text-anchor="middle" fill="#3c6a6a" fill-opacity=".16">论坛</text><text x="58" y="5" font-family="Open Sans,sans-serif" font-style="italic" font-size="21" textLength="40" fill="#6a7a90" fill-opacity=".13">.biz</text></g></g></defs>${STAMPS.map(([x, y]) => `<use href="#w" x="${x}" y="${y}"/>`).join('')}</svg>`);

define('app-screen', ':host{display:flex;flex-direction:column;position:relative;width:1080px;height:2340px;overflow:hidden;background:#fff}',
`<status-bar></status-bar><address-bar></address-bar><page-header></page-header><scroll-view></scroll-view><tab-bar></tab-bar><browser-bar></browser-bar><stamp-layer></stamp-layer>`);
</script>
</body>
</html>
